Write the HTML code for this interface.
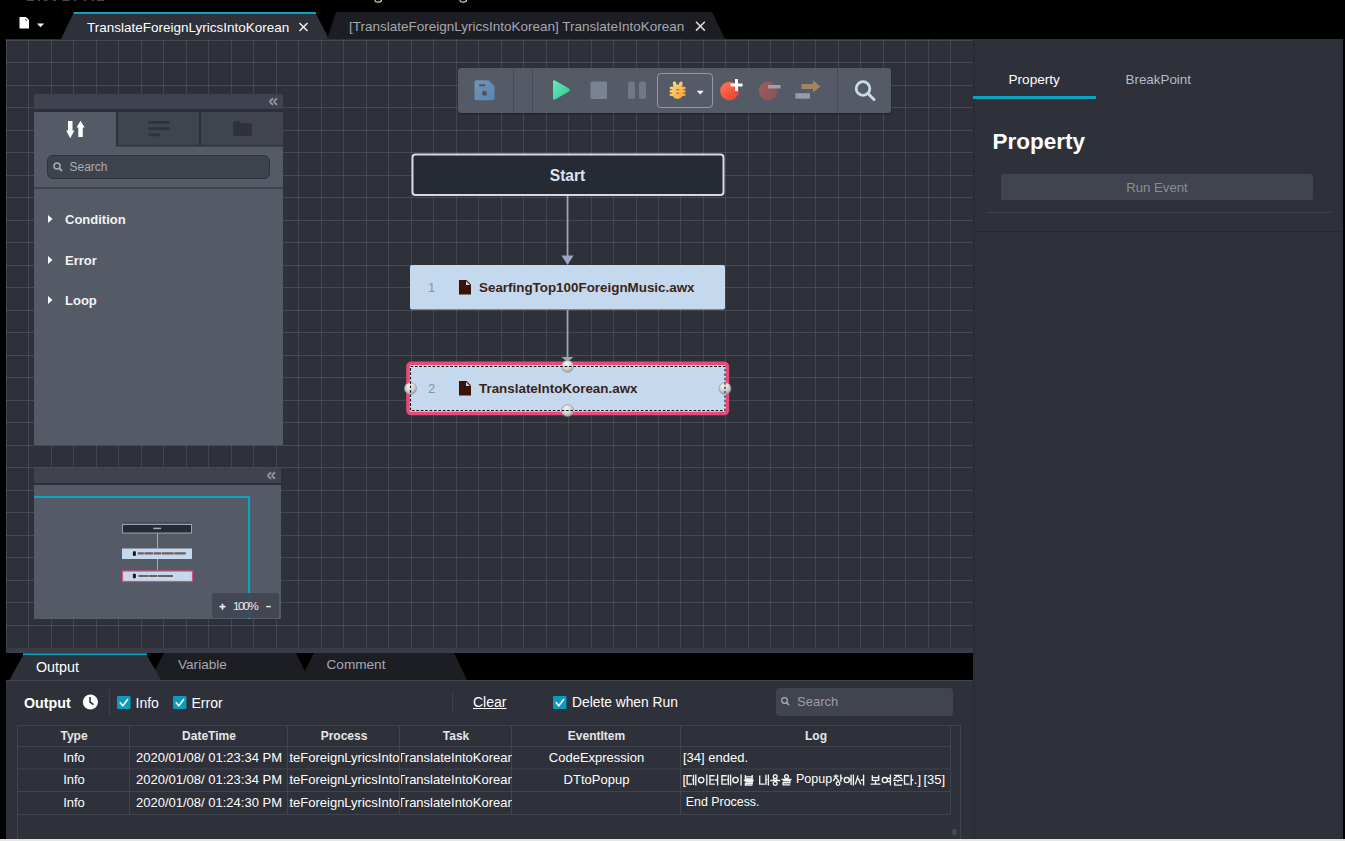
<!DOCTYPE html>
<html><head><meta charset="utf-8">
<style>
*{box-sizing:border-box;margin:0;padding:0}
html,body{width:1345px;height:841px;overflow:hidden;background:#000;font-family:"Liberation Sans",sans-serif;color:#fff}
.a{position:absolute}
.t{position:absolute;white-space:nowrap;line-height:1}
</style></head><body>
<div class="a" style="left:0;top:0;width:1345px;height:841px;overflow:hidden">

<!-- top tab bar -->
<svg class="a" style="left:0;top:0" width="1345" height="40">
  <path d="M27 0.5H34M38 0.5H40M44 0.5H47.5M53 0.5H56M62.5 0.5H69.5M74 0.5H76M84 0.5H86M92 0.5H94M97 0.5H104" stroke="#4a4a4a" stroke-width="1"/>
  <path d="M375 0Q375 2.2 378.3 2.2Q381.5 2.2 381.5 0M460 0Q460 2.2 463.3 2.2Q466.5 2.2 466.5 0" stroke="#d8d8d8" stroke-width="1.2" fill="none"/>
  <path d="M19.5 17H26L29 20V28.5H19.5Z" fill="#fff"/><path d="M25.3 18.6Q26.8 19.6 26.9 21.2Q25.6 21 25.3 19.6Z" fill="#111"/>
  <path d="M37 23.5H44L40.5 27.2Z" fill="#fff"/>
  <path d="M61 39L73 14H316L329 39Z" fill="#2e3139"/>
  <path d="M73.5 12H316V14H73.5Z" fill="#0aa3c2"/>
  <path d="M327 39L336 12H712L725 39Z" fill="#1d1e23"/>
  <path d="M299.5 23L307.5 31M307.5 23L299.5 31" stroke="#f2f2f2" stroke-width="1.5"/>
  <path d="M696 21.8L704.8 30.6M704.8 21.8L696 30.6" stroke="#dcdcdc" stroke-width="1.5"/>
</svg>
<div class="t" style="left:87px;top:20.5px;font-size:13.5px;color:#fff">TranslateForeignLyricsIntoKorean</div>
<div class="t" style="left:349px;top:20px;font-size:13.5px;color:#a4a8b0">[TranslateForeignLyricsIntoKorean] TranslateIntoKorean</div>

<!-- canvas -->
<div class="a" style="left:6px;top:39px;width:967px;height:614px;background:#2e3139"></div>
<svg class="a" style="left:0;top:0" width="1345" height="660">
  <path d="M6.5 39V648M28.5 39V648M51.5 39V648M73.5 39V648M96.5 39V648M118.5 39V648M141.5 39V648M163.5 39V648M186.5 39V648M208.5 39V648M231.5 39V648M253.5 39V648M276.5 39V648M298.5 39V648M321.5 39V648M343.5 39V648M366.5 39V648M388.5 39V648M411.5 39V648M433.5 39V648M456.5 39V648M478.5 39V648M501.5 39V648M523.5 39V648M546.5 39V648M568.5 39V648M591.5 39V648M613.5 39V648M636.5 39V648M658.5 39V648M680.5 39V648M703.5 39V648M725.5 39V648M748.5 39V648M770.5 39V648M793.5 39V648M815.5 39V648M838.5 39V648M860.5 39V648M883.5 39V648M905.5 39V648M928.5 39V648M950.5 39V648" stroke="#fff" stroke-opacity="0.1" stroke-width="1" fill="none"/><path d="M6 40.5H973M6 62.5H973M6 85.5H973M6 107.5H973M6 130.5H973M6 152.5H973M6 175.5H973M6 197.5H973M6 220.5H973M6 242.5H973M6 265.5H973M6 287.5H973M6 310.5H973M6 332.5H973M6 355.5H973M6 377.5H973M6 400.5H973M6 422.5H973M6 445.5H973M6 467.5H973M6 490.5H973M6 512.5H973M6 535.5H973M6 557.5H973M6 580.5H973M6 602.5H973M6 625.5H973" stroke="#fff" stroke-opacity="0.115" stroke-width="1" fill="none"/>
  <rect x="6" y="648" width="967" height="5" fill="#393c47"/>
</svg>



<!-- toolbar -->
<div class="a" style="left:458px;top:68px;width:433px;height:45px;background:#555a67;border-radius:3px;box-shadow:0 1px 2px rgba(0,0,0,.35)"></div>
<div class="a" style="left:513px;top:68px;width:1px;height:45px;background:#474b57"></div>
<div class="a" style="left:532px;top:68px;width:1px;height:45px;background:#474b57"></div>
<div class="a" style="left:837px;top:68px;width:1px;height:45px;background:#474b57"></div>
<div class="a" style="left:657px;top:72.5px;width:56px;height:35.5px;border:1px solid #9499a3;border-radius:4px"></div>
<svg class="a" style="left:0;top:0" width="900" height="130">
  <defs>
    <linearGradient id="gsave" x1="0" y1="0" x2="1" y2="1"><stop offset="0" stop-color="#7894b0"/><stop offset="1" stop-color="#5586b4"/></linearGradient>
    <linearGradient id="grm" x1="0" y1="0" x2="1" y2="1"><stop offset="0" stop-color="#9c5c5c"/><stop offset="1" stop-color="#8a5258"/></linearGradient>
    <linearGradient id="gplay" x1="0" y1="0" x2="1" y2="1"><stop offset="0" stop-color="#6de8c0"/><stop offset="1" stop-color="#2ac98d"/></linearGradient>
    <linearGradient id="gbug" gradientUnits="userSpaceOnUse" x1="670" y1="82" x2="686" y2="99"><stop offset="0" stop-color="#fde08a"/><stop offset="1" stop-color="#f59a30"/></linearGradient>
    <linearGradient id="gred" x1="0" y1="0" x2="1" y2="1"><stop offset="0" stop-color="#ff7a55"/><stop offset="1" stop-color="#e83a2e"/></linearGradient>
  </defs>
  <!-- save -->
  <path d="M476.5 80.2H488.6L494.5 86.1V98.5Q494.5 100.3 492.5 100.3H476.5Q474.5 100.3 474.5 98.5V82.2Q474.5 80.2 476.5 80.2Z" fill="url(#gsave)"/>
  <rect x="479" y="84.3" width="6" height="2" fill="#4d5665"/>
  <circle cx="484.5" cy="93.2" r="2.5" fill="#4d5665"/>
  <!-- play -->
  <path d="M553 81.5Q553 79.5 555 80.6L569 88.6Q570.5 90 569 91.4L555 99.4Q553 100.5 553 98.5Z" fill="url(#gplay)"/>
  <!-- stop -->
  <rect x="590.5" y="81.5" width="16.5" height="17.5" rx="1.5" fill="#7b8393"/>
  <!-- pause -->
  <rect x="628" y="81.5" width="7" height="17.5" rx="2" fill="#707888"/>
  <rect x="639" y="81.5" width="7" height="17.5" rx="2" fill="#707888"/>
  <!-- bug -->
  <g fill="url(#gbug)">
    <ellipse cx="677.6" cy="91.8" rx="6" ry="7.3"/>
    <path d="M672.8 82.2Q674.5 81 676 82.3L676.8 85.5H678.6L679.4 82.3Q681 81 682.6 82.2L682.2 86.5H673.2Z"/>
    <rect x="669.6" y="86.7" width="16" height="2.5" rx="1.2"/>
    <rect x="669.6" y="90.1" width="16" height="2.5" rx="1.2"/>
    <rect x="669.6" y="93.5" width="16" height="2.5" rx="1.2"/>
  </g>
  <rect x="676" y="89" width="3.2" height="1.3" fill="#8a6a3a" opacity=".7"/>
  <rect x="676" y="92.5" width="3.2" height="1.3" fill="#8a6a3a" opacity=".7"/>
  <path d="M696.8 90.8H703.8L700.3 94.6Z" fill="#fff"/>
  <!-- add breakpoint -->
  <circle cx="729.5" cy="91" r="9.3" fill="url(#gred)"/>
  <path d="M736.5 79V91M730.5 85H742.5" stroke="#fff" stroke-width="3"/>
  <!-- remove breakpoint -->
  <circle cx="768" cy="91" r="9.3" fill="url(#grm)"/>
  <rect x="768" y="85" width="12.5" height="3.5" fill="#9aa0ac"/>
  <!-- step -->
  <path d="M801.5 84H813V80.5L820.5 86.5L813 92.5V89H801.5Z" fill="#a2845f"/>
  <rect x="795.5" y="93.2" width="14.5" height="5.5" fill="#959ba8"/>
  <!-- search -->
  <circle cx="863" cy="88.5" r="6.8" stroke="#cbdbe3" stroke-width="2.8" fill="none"/>
  <path d="M868 93.5L874 99.5" stroke="#cbdbe3" stroke-width="3" stroke-linecap="round"/>
</svg>

<!-- flow -->
<svg class="a" style="left:0;top:0" width="980" height="660">
  <rect x="412.5" y="154.5" width="311" height="40.5" rx="3" fill="#262a33" stroke="#d5d9ec" stroke-width="2"/>
  <path d="M567.5 196V257M567.5 310V358" stroke="#9da6c0" stroke-width="1.6"/>
  <path d="M561.5 255.5H573.5L567.5 265Z" fill="#9da6c0"/>
  <path d="M561.5 357H573.5L567.5 362Z" fill="#9da6c0"/>
  <rect x="410" y="265" width="315" height="44.5" rx="2" fill="#c5d9ee"/>
  <rect x="408" y="363.3" width="319.3" height="50.2" rx="3" fill="#c5d9ee" stroke="#e8497c" stroke-width="3.6"/>
  <path d="M459 280H466.5L471 284.5V294.5H459Z" fill="#3a1306"/>
  <path d="M466 281V285H470Z" fill="#c5d9ee"/>
  <path d="M459 381H466.5L471 385.5V395.5H459Z" fill="#3a1306"/>
  <path d="M466 382V386H470Z" fill="#c5d9ee"/>
</svg>
<div class="t" style="left:412px;top:168.2px;width:311px;text-align:center;font-size:15.6px;font-weight:bold;color:#dfe2f0">Start</div>
<div class="t" style="left:428px;top:281px;font-size:13px;color:#8a8f99">1</div>
<div class="t" style="left:479px;top:281px;font-size:13.4px;font-weight:bold;color:#3a2418">SearfingTop100ForeignMusic.awx</div>
<div class="t" style="left:428px;top:382px;font-size:13px;color:#8a8f99">2</div>
<div class="t" style="left:479px;top:382px;font-size:13.4px;font-weight:bold;color:#3a2418">TranslateIntoKorean.awx</div>
<svg class="a" style="left:0;top:0" width="980" height="660">
  <defs><radialGradient id="gh" cx=".42" cy=".3" r=".75"><stop offset="0" stop-color="#f4f4f4"/><stop offset=".55" stop-color="#d2d2d2"/><stop offset="1" stop-color="#9a9a9a"/></radialGradient></defs>
  <g stroke="#8a8a8a" stroke-width=".6" fill="url(#gh)">
  <circle cx="567.5" cy="366.3" r="6"/>
  <circle cx="567.5" cy="410.6" r="6"/>
  <circle cx="410.5" cy="388.4" r="6"/>
  <circle cx="725" cy="388.4" r="6"/>
  </g>
  <rect x="410.5" y="366.5" width="314.5" height="44" fill="none" stroke="#f4f8ff" stroke-width="1"/>
  <rect x="410.5" y="366.5" width="314.5" height="44" fill="none" stroke="#111" stroke-width="1.1" stroke-dasharray="2.8 1.6"/>
</svg>

<!-- palette panel -->
<div class="a" style="left:34px;top:94px;width:249px;height:15px;background:#3f4350;border-radius:2px 2px 0 0"></div>
<div class="a" style="left:34px;top:109px;width:249px;height:3px;background:#2c2f37"></div>
<div class="a" style="left:34px;top:112px;width:249px;height:333px;background:#555a67"></div>
<div class="a" style="left:118px;top:112px;width:165px;height:33px;background:#40444f"></div>
<div class="a" style="left:116px;top:112px;width:2px;height:33px;background:#2c2f37"></div>
<div class="a" style="left:199px;top:112px;width:2px;height:33px;background:#2c2f37"></div>
<svg class="a" style="left:0;top:0" width="300" height="200">
  <path d="M269.6 101.6L273 98.3M269.6 101.6L273 104.9M273.6 101.6L277 98.3M273.6 101.6L277 104.9" stroke="#92969f" stroke-width="1.9" fill="none"/>
  <path d="M68 121H72.5V130.5H74.3L70.25 138.2L66.2 130.5H68Z M78.3 137H82.8V127.5H84.6L80.55 120.7L76.5 127.5H78.3Z" fill="#fff"/>
  <path d="M149.5 122.4H168.5M149.5 128.6H168.5M149.5 134.8H159" stroke="#2f323a" stroke-width="2.7" stroke-linecap="round"/>
  <path d="M233 123.3Q233 121.3 235 121.3H239.5L241.5 123.3H250Q252 123.3 252 125.3V134Q252 136 250 136H235Q233 136 233 134Z" fill="#2f323a"/>
  <rect x="116" y="145" width="167" height="1.5" fill="#30333b"/>
</svg>
<div class="a" style="left:47px;top:155px;width:223px;height:24px;background:#3e424d;border:1px solid #2f323a;border-radius:6px"></div>
<svg class="a" style="left:0;top:0" width="300" height="200">
  <circle cx="57" cy="166" r="3" stroke="#a9adb5" stroke-width="1.5" fill="none"/>
  <path d="M59.2 168.2L62 171" stroke="#a9adb5" stroke-width="1.8"/>
</svg>
<div class="t" style="left:69.5px;top:161px;font-size:12px;color:#a9adb5">Search</div>
<div class="a" style="left:34px;top:187px;width:249px;height:2px;background:#40444f"></div>
<svg class="a" style="left:0;top:0" width="300" height="320">
  <path d="M48 215V223L52.5 219Z M48 256V264L52.5 260Z M48 296V304L52.5 300Z" fill="#fff"/>
</svg>
<div class="t" style="left:65px;top:213px;font-size:13px;font-weight:bold;color:#f2f2f2">Condition</div>
<div class="t" style="left:65px;top:254px;font-size:13px;font-weight:bold;color:#f2f2f2">Error</div>
<div class="t" style="left:65px;top:294px;font-size:13px;font-weight:bold;color:#f2f2f2">Loop</div>

<!-- minimap -->
<div class="a" style="left:34px;top:468px;width:247px;height:15px;background:#3f4350"></div>
<div class="a" style="left:34px;top:483px;width:247px;height:2px;background:#2c2f37"></div>
<div class="a" style="left:34px;top:485px;width:247px;height:134px;background:#555a67"></div>
<svg class="a" style="left:0;top:0" width="300" height="640">
  <path d="M267.6 475.6L271 472.3M267.6 475.6L271 478.9M271.6 475.6L275 472.3M271.6 475.6L275 478.9" stroke="#92969f" stroke-width="1.9" fill="none"/>
  <path d="M34 497H249V619" stroke="#0aa3c2" stroke-width="2.2" fill="none"/>
  <rect x="122.5" y="524.5" width="69" height="8.5" fill="#262a33" stroke="#9da1ae" stroke-width="1"/><path d="M123 522.6H191" stroke="#474b57" stroke-width="1"/>
  <path d="M157.5 533V548.5M157.5 559V570.5" stroke="#9da6c0" stroke-width="1"/>
  <rect x="122" y="548.5" width="70" height="10.5" fill="#c5d9ee"/>
  <rect x="122.5" y="571" width="70" height="10.5" fill="#c5d9ee" stroke="#d2507e" stroke-width="1.2"/>
  <rect x="132.9" y="551.3" width="3" height="4.6" rx=".8" fill="#2a1208"/>
  <rect x="132.9" y="573.7" width="3" height="4.6" rx=".8" fill="#2a1208"/>
  <path d="M137.8 553.4H185.8" stroke="#6e5e5c" stroke-width="2.2" stroke-dasharray="6 .6 9 .6 7 .6 12 .6 14"/>
  <path d="M138.5 576H173" stroke="#6e5e5c" stroke-width="2.2" stroke-dasharray="10 .6 8 .6 16"/>
  <path d="M153.3 528.4H161.2" stroke="#a9adb8" stroke-width="1.5"/>
</svg>
<div class="a" style="left:211.5px;top:593px;width:67.5px;height:24.5px;background:rgba(64,68,80,0.86);border-radius:3px"></div>
<svg class="a" style="left:0;top:0" width="300" height="640"><path d="M219.5 606.7H225.5M222.5 603.7V609.7" stroke="#eee" stroke-width="1.7"/><path d="M266.2 606.6H270.8" stroke="#eee" stroke-width="1.4"/></svg>
<div class="t" style="left:233px;top:601px;font-size:11.8px;letter-spacing:-1.5px;color:#e8e8ea">100%</div>

<!-- right panel -->
<div class="a" style="left:973px;top:39px;width:370px;height:800px;background:#2e3139;border-left:2px solid #2a2d35"></div>

<!-- output panel -->
<div class="a" style="left:6px;top:680px;width:967px;height:159px;background:#2e3139;border-top:1px solid #40434d"></div>
<div class="a" style="left:0;top:839px;width:1345px;height:2px;background:#e6e6e6"></div>


<!-- output tabs -->
<svg class="a" style="left:0;top:0" width="980" height="700">
  <path d="M150 680L164 653H296L309 680Z" fill="#1d1e23"/>
  <path d="M300 680L314 653H454L467 680Z" fill="#1d1e23"/>
  <path d="M9.5 680L23 655.5H147L161 680Z" fill="#2e3139"/>
  <rect x="23" y="653.3" width="124" height="2" fill="#0aa3c2"/>
</svg>
<div class="t" style="left:36px;top:660px;font-size:14.3px;color:#fff">Output</div>
<div class="t" style="left:178px;top:658px;font-size:13.6px;color:#a5a9b0">Variable</div>
<div class="t" style="left:326.5px;top:658px;font-size:13.6px;color:#a5a9b0">Comment</div>

<!-- output toolbar -->
<div class="t" style="left:24px;top:696px;font-size:14.3px;font-weight:bold;color:#fff">Output</div>
<svg class="a" style="left:0;top:0" width="980" height="841">
  <circle cx="90.4" cy="702" r="7.6" fill="#fff"/>
  <path d="M90 697V702L93.5 704.6" stroke="#2e3139" stroke-width="1.6" fill="none"/>
  <rect x="109" y="689" width="1" height="26" fill="#3e414b"/>
  <rect x="117" y="696" width="13.5" height="13" rx="1" fill="#0b9bbb"/>
  <path d="M119.8 702.3L122.8 705.8L128 699" stroke="#fff" stroke-width="1.6" fill="none"/>
  <rect x="173" y="696" width="13.5" height="13" rx="1" fill="#0b9bbb"/>
  <path d="M175.8 702.3L178.8 705.8L184 699" stroke="#fff" stroke-width="1.6" fill="none"/>
  <rect x="452" y="691.5" width="1" height="21.5" fill="#3e414b"/>
  <rect x="553" y="696" width="13.5" height="13" rx="1" fill="#0b9bbb"/>
  <path d="M555.8 702.3L558.8 705.8L564 699" stroke="#fff" stroke-width="1.6" fill="none"/>
</svg>
<div class="t" style="left:135.5px;top:696px;font-size:14px;color:#fff">Info</div>
<div class="t" style="left:191.5px;top:696px;font-size:14px;color:#fff">Error</div>
<div class="t" style="left:473px;top:695px;font-size:14px;color:#fff;text-decoration:underline">Clear</div>
<div class="t" style="left:572px;top:696px;font-size:13.8px;color:#fff">Delete when Run</div>
<div class="a" style="left:776px;top:688px;width:177px;height:28px;background:#40444f;border-radius:4px"></div>
<svg class="a" style="left:0;top:0" width="980" height="841">
  <circle cx="784.5" cy="700.5" r="2.8" stroke="#a9adb5" stroke-width="1.3" fill="none"/>
  <path d="M786.5 702.5L789 705" stroke="#a9adb5" stroke-width="1.6"/>
</svg>
<div class="t" style="left:797px;top:695px;font-size:13px;color:#9a9ea6">Search</div>

<!-- table -->
<svg class="a" style="left:0;top:0" width="980" height="841">
  <g stroke="#40444e" stroke-width="1" fill="none">
  <path d="M17.5 725V839M129.5 725V814.5M287.5 725V814.5M399.5 725V814.5M511.5 725V814.5M680.5 725V814.5M950.5 725V814.5"/>
  <path d="M17.5 725.5H961M960.5 725V839M17.5 746.5H950.5M17.5 769H950.5M17.5 791.5H950.5M17.5 814.5H950.5"/>
  </g>
  <path d="M974.5 680V839" stroke="#2a2d35" stroke-width="1"/>
  <ellipse cx="954.5" cy="832" rx="2.5" ry="3.2" fill="#454953"/>
</svg>


<!-- table text -->
<div class="t" style="left:18.5px;top:730px;width:111.0px;text-align:center;font-size:12px;font-weight:bold;color:#e6e6e6">Type</div>
<div class="t" style="left:130.5px;top:730px;width:157.0px;text-align:center;font-size:12px;font-weight:bold;color:#e6e6e6">DateTime</div>
<div class="t" style="left:288.5px;top:730px;width:111.0px;text-align:center;font-size:12px;font-weight:bold;color:#e6e6e6">Process</div>
<div class="t" style="left:400.5px;top:730px;width:111.0px;text-align:center;font-size:12px;font-weight:bold;color:#e6e6e6">Task</div>
<div class="t" style="left:512.5px;top:730px;width:168.0px;text-align:center;font-size:12px;font-weight:bold;color:#e6e6e6">EventItem</div>
<div class="t" style="left:681.5px;top:730px;width:269.0px;text-align:center;font-size:12px;font-weight:bold;color:#e6e6e6">Log</div>
<div class="a" style="left:18.5px;top:750.5px;width:111.0px;height:16px;overflow:hidden"><div class="t" style="left:50%;top:0;transform:translateX(-50%);font-size:13px;color:#fff">Info</div></div>
<div class="a" style="left:130.5px;top:750.5px;width:157.0px;height:16px;overflow:hidden"><div class="t" style="left:50%;top:0;transform:translateX(-50%);font-size:13px;color:#fff">2020/01/08/ 01:23:34 PM</div></div>
<div class="a" style="left:288.5px;top:750.5px;width:111.0px;height:16px;overflow:hidden"><div class="t" style="left:50%;top:0;transform:translateX(-50%);font-size:13px;color:#fff">TranslateForeignLyricsIntoKorean</div></div>
<div class="a" style="left:400.5px;top:750.5px;width:111.0px;height:16px;overflow:hidden"><div class="t" style="left:50%;top:0;transform:translateX(-50%);font-size:13px;color:#fff">TranslateIntoKorean</div></div>
<div class="a" style="left:512.5px;top:750.5px;width:168.0px;height:16px;overflow:hidden"><div class="t" style="left:50%;top:0;transform:translateX(-50%);font-size:13px;color:#fff">CodeExpression</div></div>
<div class="t" style="left:683.0px;top:750.5px;font-size:13px;color:#fff;white-space:pre">[34] ended.</div>
<div class="a" style="left:18.5px;top:773px;width:111.0px;height:16px;overflow:hidden"><div class="t" style="left:50%;top:0;transform:translateX(-50%);font-size:13px;color:#fff">Info</div></div>
<div class="a" style="left:130.5px;top:773px;width:157.0px;height:16px;overflow:hidden"><div class="t" style="left:50%;top:0;transform:translateX(-50%);font-size:13px;color:#fff">2020/01/08/ 01:23:34 PM</div></div>
<div class="a" style="left:288.5px;top:773px;width:111.0px;height:16px;overflow:hidden"><div class="t" style="left:50%;top:0;transform:translateX(-50%);font-size:13px;color:#fff">TranslateForeignLyricsIntoKorean</div></div>
<div class="a" style="left:400.5px;top:773px;width:111.0px;height:16px;overflow:hidden"><div class="t" style="left:50%;top:0;transform:translateX(-50%);font-size:13px;color:#fff">TranslateIntoKorean</div></div>
<div class="a" style="left:512.5px;top:773px;width:168.0px;height:16px;overflow:hidden"><div class="t" style="left:50%;top:0;transform:translateX(-50%);font-size:13px;color:#fff">DTtoPopup</div></div>
<!--KR-->
<svg class="a" style="left:0;top:0" width="980" height="841"><g fill="none" stroke="#f4f4f4" stroke-width="1.35"><path transform="translate(686.2 774.6)" d="M5.6 1.2H0.9V9.6H5.9M7.3 0.2V10.3M9.6 0V11M5.9 5.1H7.3"/><path transform="translate(698.2 774.6)" d="M0.2999999999999998 5.5a2.7 2.7 0 1 0 5.4 0a2.7 2.7 0 1 0 -5.4 0M8.6 0V11"/><path transform="translate(709 774.6)" d="M5.6 1.2H0.9V9.6H5.9M0.9 5.3H5.3M8.6 0V11M5.9 5.4H8.6"/><path transform="translate(721 774.6)" d="M5.6 1.2H0.9V9.6H5.9M0.9 5.3H5.3M7.3 0.2V10.3M9.6 0V11M5.9 5.1H7.3"/><path transform="translate(732.5 774.6)" d="M0.2999999999999998 5.5a2.7 2.7 0 1 0 5.4 0a2.7 2.7 0 1 0 -5.4 0M8.6 0V11"/><path transform="translate(743.8 774.6)" d="M1.6 0.3V4.4H8.4V0.3M1.6 2.3H8.4M0 5.9H10M1.6 7.2H8.4V8.9H1.6V10.6H8.7"/><path transform="translate(758.8 774.6)" d="M0.9 0.8V9.6H5.9M7.1 0.2V10.3M9.6 0V11M7.1 5.1H8.4"/><path transform="translate(770.2 774.6)" d="M3.1 2a1.9 1.9 0 1 0 3.8 0a1.9 1.9 0 1 0 -3.8 0M3.4 4.1V5.9M6.6 4.1V5.9M0 5.9H10M3.1 8.9a1.9 1.9 0 1 0 3.8 0a1.9 1.9 0 1 0 -3.8 0"/><path transform="translate(781.5 774.6)" d="M3.1 2a1.9 1.9 0 1 0 3.8 0a1.9 1.9 0 1 0 -3.8 0M0 4.9H10M1.6 6.3H8.4V8.2H1.6V10.3H8.7"/><path transform="translate(833 774.6)" d="M3.1 0V1M0.6 1.6H5.6M3.1 1.6L0.3 6.5M3.1 3.2L5.9 6.5M7.8 0V7.2M7.8 3.6H9.9M3.2 9a1.8 1.8 0 1 0 3.6 0a1.8 1.8 0 1 0 -3.6 0"/><path transform="translate(843.8 774.6)" d="M0.3999999999999999 5.5a2.6 2.6 0 1 0 5.2 0a2.6 2.6 0 1 0 -5.2 0M7.3 0.2V10.3M9.6 0V11M5.9 5.1H7.3"/><path transform="translate(855 774.6)" d="M3.1 0.8L0.3 9.8M3.1 3.6L5.9 9.8M8.6 0V11M5.9 5.4H8.6"/><path transform="translate(870.5 774.6)" d="M1.8 0.6V5.8H8.2V0.6M1.8 3.1H8.2M5 5.8V9.2M0 9.5H10"/><path transform="translate(881.8 774.6)" d="M0.3999999999999999 5.5a2.6 2.6 0 1 0 5.2 0a2.6 2.6 0 1 0 -5.2 0M8.6 0V11M5.9 3.8H8.6M5.9 6.9H8.6"/><path transform="translate(893 774.6)" d="M1 0.8H9M5 0.8L0.8 4.4M5 1.6L9.2 4.4M0 5.8H10M5 5.8V7.6M1.8 7.4V10.5H9"/><path transform="translate(903.6 774.6)" d="M5.6 1.2H0.9V9.6H5.9M7.6 0V11M7.6 5.4H9.9"/></g></svg>
<div class="t" style="left:682.5px;top:772.5px;font-size:13px;color:#fff">[</div>
<div class="t" style="left:796px;top:772.5px;font-size:12.5px;color:#fff">Popup</div>
<div class="t" style="left:913.8px;top:772.5px;font-size:13px;color:#fff">.]</div>
<div class="t" style="left:923.5px;top:772.5px;font-size:13px;color:#fff">[35]</div>
<!--/KR-->
<div class="a" style="left:18.5px;top:795.5px;width:111.0px;height:16px;overflow:hidden"><div class="t" style="left:50%;top:0;transform:translateX(-50%);font-size:13px;color:#fff">Info</div></div>
<div class="a" style="left:130.5px;top:795.5px;width:157.0px;height:16px;overflow:hidden"><div class="t" style="left:50%;top:0;transform:translateX(-50%);font-size:13px;color:#fff">2020/01/08/ 01:24:30 PM</div></div>
<div class="a" style="left:288.5px;top:795.5px;width:111.0px;height:16px;overflow:hidden"><div class="t" style="left:50%;top:0;transform:translateX(-50%);font-size:13px;color:#fff">TranslateForeignLyricsIntoKorean</div></div>
<div class="a" style="left:400.5px;top:795.5px;width:111.0px;height:16px;overflow:hidden"><div class="t" style="left:50%;top:0;transform:translateX(-50%);font-size:13px;color:#fff">TranslateIntoKorean</div></div>
<div class="a" style="left:512.5px;top:795.5px;width:168.0px;height:16px;overflow:hidden"><div class="t" style="left:50%;top:0;transform:translateX(-50%);font-size:13px;color:#fff"></div></div>
<div class="t" style="left:685.8px;top:796px;font-size:12.4px;color:#fff">End Process.</div>

<!-- right panel content -->
<div class="t" style="left:1008.5px;top:73px;font-size:13.6px;color:#fff">Property</div>
<div class="t" style="left:1125.5px;top:73px;font-size:13.4px;color:#b8bcc2">BreakPoint</div>
<div class="a" style="left:973px;top:96px;width:123px;height:3px;background:#0aa3c2"></div>
<div class="t" style="left:992.5px;top:131px;font-size:22.5px;font-weight:bold;color:#fff">Property</div>
<div class="a" style="left:1001px;top:174px;width:312px;height:26px;background:#40444f;border-radius:2px"></div>
<div class="t" style="left:1001px;top:181px;width:312px;text-align:center;font-size:13.2px;color:#8a8e96">Run Event</div>
<div class="a" style="left:987px;top:212px;width:344px;height:1px;background:#41454e"></div>
<div class="a" style="left:975px;top:231px;width:367px;height:1px;background:#25282f"></div>
<div class="a" style="left:1341px;top:231px;width:1px;height:608px;background:#282b32"></div>

</div>
</body></html>
